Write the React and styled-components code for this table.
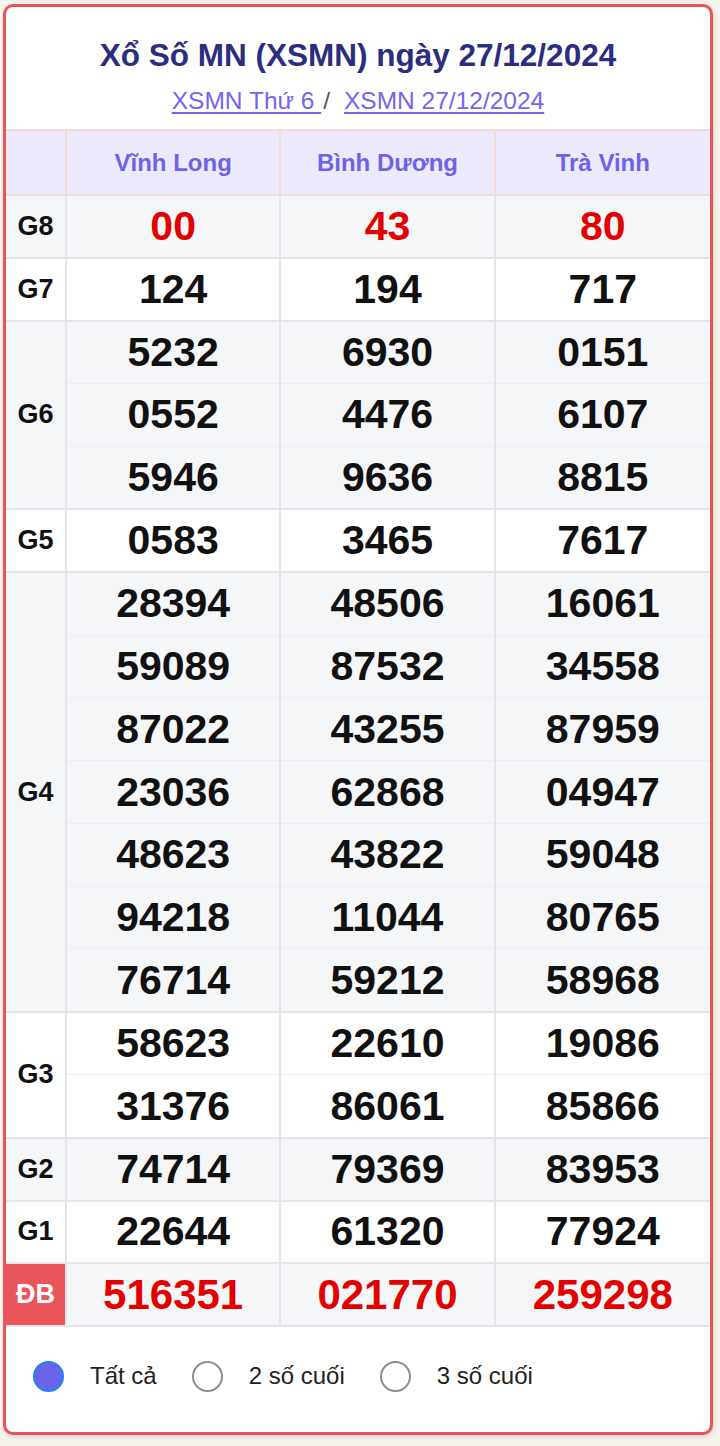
import styled, { createGlobalStyle } from 'styled-components';

const GlobalStyle = createGlobalStyle`
  html, body {
    margin: 0;
    padding: 0;
    background: #f6f3ec;
  }
  body {
    font-family: 'Liberation Sans', Arial, sans-serif;
  }
`;

const Page = styled.div`
  padding: 4px 7px 11px 3px;
`;

const Card = styled.div`
  background: #ffffff;
  border: 3px solid #ea5459;
  border-radius: 10px;
  overflow: hidden;
  box-shadow: 1px 2px 4px rgba(0, 0, 0, 0.12);
`;

const Head = styled.div`
  height: 122px;
  display: flex;
  flex-direction: column;
  align-items: center;
  padding-top: 29px;
  box-sizing: border-box;
`;

const Title = styled.h1`
  margin: 0;
  font-size: 31.5px;
  font-weight: 700;
  color: #2b2e80;
  line-height: 38px;
`;

const Links = styled.div`
  margin-top: 13px;
  font-size: 24.5px;
  color: #555;
  line-height: 28px;
`;

const Link = styled.a`
  color: #7266ee;
  text-decoration: underline;
  text-underline-offset: 3px;
`;

const Slash = styled.span`
  margin: 0 14px 0 2px;
  color: #555;
`;

const cols = '61px repeat(3, 1fr)';
const ROW = 62.85;

const HeaderRow = styled.div`
  display: grid;
  grid-template-columns: ${cols};
  height: 67px;
  background: #eeeafd;
  border-top: 2px solid #f3dcdc;
  border-bottom: 2px solid #f3dcdc;
  box-sizing: border-box;
`;

const HeaderCell = styled.div`
  display: flex;
  align-items: center;
  justify-content: center;
  font-size: 24px;
  font-weight: 700;
  color: #6c63e8;
  border-right: ${p => (p.last ? 'none' : '2px solid #f3dcdc')};
`;

const PrizeRow = styled.div`
  display: grid;
  grid-template-columns: ${cols};
  height: ${p => p.count * ROW}px;
  background: ${p => (p.alt ? '#f5f6f8' : '#ffffff')};
  border-bottom: 2px solid #e3e4ec;
  box-sizing: border-box;
`;

const Label = styled.div`
  display: flex;
  align-items: center;
  justify-content: center;
  font-size: 27px;
  font-weight: 700;
  color: ${p => (p.special ? '#ffffff' : '#111111')};
  background: ${p => (p.special ? '#e9555a' : 'transparent')};
  border-right: 2px solid #e3e4ec;
`;

const NumCol = styled.div`
  display: flex;
  flex-direction: column;
  border-right: ${p => (p.last ? 'none' : '2px solid #e3e4ec')};
`;

const Num = styled.div`
  flex: 1;
  display: flex;
  align-items: center;
  justify-content: center;
  font-size: ${p => (p.big ? 42 : 41)}px;
  font-weight: 700;
  color: ${p => (p.red ? '#e30000' : '#111111')};
  border-top: ${p => (p.first ? 'none' : '1px solid #eceef3')};
`;

const Options = styled.div`
  display: flex;
  align-items: center;
  height: 105px;
  padding-left: 27px;
  padding-bottom: 7px;
  box-sizing: border-box;
`;

const Option = styled.label`
  display: flex;
  align-items: center;
  margin-right: 35px;
  font-size: 24px;
  color: #222;
`;

const Radio = styled.span`
  width: 31px;
  height: 31px;
  border-radius: 50%;
  box-sizing: border-box;
  margin-right: 26px;
  background: ${p => (p.checked ? '#6c63e8' : '#ffffff')};
  border: ${p => (p.checked ? '2px solid #1a84f2' : '2.5px solid #8e8e8e')};
`;

const provinces = ['Vĩnh Long', 'Bình Dương', 'Trà Vinh'];

const prizes = [
  { name: 'G8', red: true, values: [['00'], ['43'], ['80']] },
  { name: 'G7', values: [['124'], ['194'], ['717']] },
  {
    name: 'G6',
    values: [
      ['5232', '0552', '5946'],
      ['6930', '4476', '9636'],
      ['0151', '6107', '8815'],
    ],
  },
  { name: 'G5', values: [['0583'], ['3465'], ['7617']] },
  {
    name: 'G4',
    values: [
      ['28394', '59089', '87022', '23036', '48623', '94218', '76714'],
      ['48506', '87532', '43255', '62868', '43822', '11044', '59212'],
      ['16061', '34558', '87959', '04947', '59048', '80765', '58968'],
    ],
  },
  { name: 'G3', values: [['58623', '31376'], ['22610', '86061'], ['19086', '85866']] },
  { name: 'G2', values: [['74714'], ['79369'], ['83953']] },
  { name: 'G1', values: [['22644'], ['61320'], ['77924']] },
  { name: 'ĐB', red: true, special: true, values: [['516351'], ['021770'], ['259298']] },
];

export default function App() {
  return (
    <>
      <GlobalStyle />
      <Page>
        <Card>
          <Head>
            <Title>Xổ Số MN (XSMN) ngày 27/12/2024</Title>
            <Links>
              <Link href="#">XSMN Thứ 6 </Link>
              <Slash>/</Slash>
              <Link href="#">XSMN 27/12/2024</Link>
            </Links>
          </Head>

          <HeaderRow>
            <HeaderCell />
            {provinces.map((p, i) => (
              <HeaderCell key={p} last={i === provinces.length - 1}>{p}</HeaderCell>
            ))}
          </HeaderRow>

          {prizes.map((prize, idx) => (
            <PrizeRow key={prize.name} count={prize.values[0].length} alt={idx % 2 === 0}>
              <Label special={prize.special}>{prize.name}</Label>
              {prize.values.map((col, ci) => (
                <NumCol key={ci} last={ci === 2}>
                  {col.map((n, ni) => (
                    <Num key={ni} first={ni === 0} red={prize.red} big={prize.special}>{n}</Num>
                  ))}
                </NumCol>
              ))}
            </PrizeRow>
          ))}

          <Options>
            <Option><Radio checked />Tất cả</Option>
            <Option><Radio />2 số cuối</Option>
            <Option><Radio />3 số cuối</Option>
          </Options>
        </Card>
      </Page>
    </>
  );
}
